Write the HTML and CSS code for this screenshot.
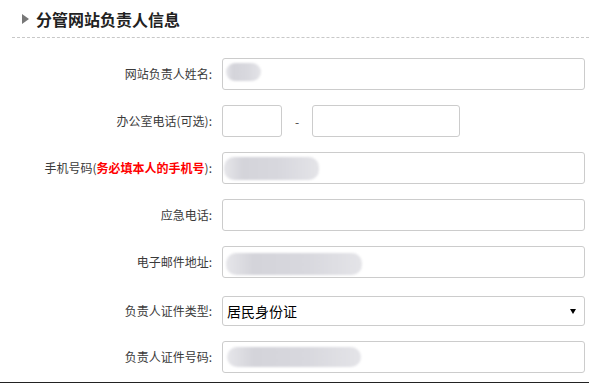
FILE: index.html
```html
<!DOCTYPE html>
<html lang="zh-CN">
<head>
<meta charset="utf-8">
<link rel="stylesheet" href="styles.css">
</head>
<body>
<div class="page">
  <div class="section-head">
    <span class="arrow"></span>
    <h2 class="title">分管网站负责人信息</h2>
  </div>
  <div class="form">
    <div class="row">
      <label class="label">网站负责人姓名:</label>
      <div class="field"><span class="blur b1"></span></div>
    </div>
    <div class="row">
      <label class="label">办公室电话(可选):</label>
      <div class="field small"></div>
      <span class="dash">-</span>
      <div class="field medium"></div>
    </div>
    <div class="row">
      <label class="label">手机号码(<span class="req">务必填本人的手机号</span>):</label>
      <div class="field"><span class="blur b3"></span></div>
    </div>
    <div class="row">
      <label class="label">应急电话:</label>
      <div class="field"></div>
    </div>
    <div class="row">
      <label class="label">电子邮件地址:</label>
      <div class="field"><span class="blur b5"></span></div>
    </div>
    <div class="row row-select">
      <label class="label">负责人证件类型:</label>
      <div class="field select"><span class="select-text">居民身份证</span><span class="caret"></span></div>
    </div>
    <div class="row last">
      <label class="label">负责人证件号码:</label>
      <div class="field"><span class="blur b7"></span></div>
    </div>
  </div>
  <div class="bottom-line"></div>
</div>
</body>
</html>
```
FILE: styles.css
```css
* { box-sizing: border-box; }
html, body {
  margin: 0;
  padding: 0;
  background: #fff;
}
body {
  font-family: "Microsoft YaHei", "Noto Sans CJK SC", "Liberation Sans", sans-serif;
  color: #333;
  width: 589px;
  height: 383px;
  overflow: hidden;
}
.section-head {
  margin-left: 12px;
  height: 38px;
  border-bottom: 1px dashed #c8c8c8;
  display: flex;
  align-items: center;
  padding-left: 10px;
}
.arrow {
  width: 0;
  height: 0;
  border-top: 5px solid transparent;
  border-bottom: 5px solid transparent;
  border-left: 7px solid #777;
  margin-right: 7px;
}
.title {
  margin: 0;
  font-size: 16px;
  font-weight: bold;
  color: #222;
  line-height: 20px;
}
.form {
  padding-top: 20px;
}
.row {
  display: flex;
  align-items: center;
  height: 32px;
  margin-bottom: 15px;
}
.row-select {
  margin-top: 18px;
  height: 30px;
}
.row.last { margin-bottom: 0; }
.label {
  width: 213px;
  padding-right: 1px;
  text-align: right;
  font-size: 12px;
  color: #3a3a3a;
  margin-right: 9px;
  white-space: nowrap;
  margin-top: -1px;
}
.req {
  color: #f00;
  font-weight: bold;
}
.field {
  width: 363px;
  height: 32px;
  border: 1px solid #ccc;
  border-radius: 3px;
  background: #fff;
  position: relative;
  overflow: hidden;
}
.row-select .field { height: 30px; }
.field.small { width: 60px; }
.field.medium { width: 148px; }
.dash {
  width: 30px;
  text-align: center;
  font-size: 12px;
  color: #444;
}
.select {
  display: flex;
  align-items: center;
  justify-content: space-between;
  padding: 0 8px 0 4px;
}
.select-text {
  font-size: 14px;
  color: #000;
}
.caret {
  width: 0;
  height: 0;
  border-left: 3px solid transparent;
  border-right: 3px solid transparent;
  border-top: 5px solid #000;
}
.blur {
  position: absolute;
  top: 4px;
  height: 20px;
  border-radius: 10px;
  background: linear-gradient(90deg, #e6e6ea 0%, #d4d4da 20%, #d8d8de 60%, #e4e4e8 100%);
  filter: blur(1px);
}
.b1 { left: 3px; width: 35px; top: 4px; height: 18px; }
.b3 { left: 1px; width: 95px; top: 4px; height: 23px; }
.b5 { left: 3px; width: 136px; top: 6px; height: 22px; }
.b7 { left: 4px; width: 134px; top: 5px; height: 20px; }
.bottom-line {
  margin-top: 9px;
  height: 1px;
  background: #222;
}
```
